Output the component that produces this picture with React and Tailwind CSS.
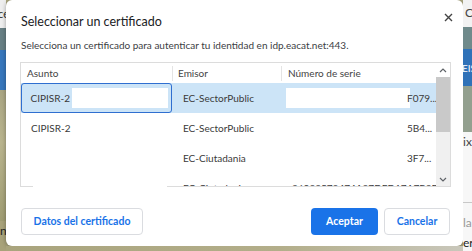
import React from "react";

const font = { fontFamily: 'Lato, "Noto Sans", sans-serif' };

const rows = [
  { subject: "CIPISR-2", issuer: "EC-SectorPublic", serial: "F079...", selected: true, hide: true },
  { subject: "CIPISR-2", issuer: "EC-SectorPublic", serial: "5B4...", hide: true },
  { subject: "", issuer: "EC-Ciutadania", serial: "3F7...", hide: true },
  { subject: "", issuer: "EC-Ciutadania", serial: "36022573474A27DFD17A7B8D" },
];

function Chevron({ up }) {
  return (
    <svg width="8" height="5" viewBox="0 0 8 5" fill="none">
      <polyline
        points={up ? "1,4 4,1 7,4" : "1,1 4,4 7,1"}
        stroke="#5f6368"
        strokeWidth="1.2"
      />
    </svg>
  );
}

function Row({ r }) {
  return (
    <div className={`flex h-[30px] shrink-0 items-center ${r.selected ? "bg-[#cce4f7]" : ""}`}>
      <div
        className={`flex h-full w-[151px] shrink-0 items-center whitespace-nowrap ${
          r.selected ? "rounded-[3px] border-[1.5px] border-[#2f6fd0] pl-[8.5px]" : "pl-[10px]"
        }`}
      >
        <span>{r.subject}</span>
        {r.subject && r.selected && <span className="ml-[2px] h-[20px] w-[96px] shrink-0 bg-white" />}
      </div>
      <div className="w-[109px] shrink-0 whitespace-nowrap pl-[11px]">{r.issuer}</div>
      <div className="flex w-[155px] shrink-0 items-center overflow-hidden pl-[5px]">
        {r.hide ? (
          <>
            <span className={`relative h-[20px] w-[124px] shrink-0 ${r.selected ? "bg-white" : "bg-transparent"}`} />
            <span className="relative -ml-[3px] whitespace-nowrap">{r.serial}</span>
          </>
        ) : (
          <span className="whitespace-nowrap pl-[6px]">{r.serial}</span>
        )}
      </div>
    </div>
  );
}

export default function App() {
  return (
    <div style={font} className="flex h-[251px] w-[472px] overflow-hidden bg-[#aaa67f]">
      {/* left strip of the page behind */}
      <div className="flex w-[6px] shrink-0 flex-col overflow-hidden">
        <div className="h-[28px] whitespace-nowrap bg-[#eeeeee] pt-[7px] text-[11px] leading-[14px] text-[#333]">
          <span className="-ml-[2px]">ce</span>
        </div>
        <div className="h-[22px] bg-[#677f84]" />
        <div className="h-[40px] bg-[#3777bc]" />
        <div className="flex-1 bg-[linear-gradient(180deg,#a9a583,#b9b48e_40%,#9f9c72)]" />
        <div className="h-[30px] bg-[#a8a27a] text-[12px] leading-[20px] text-[#222]">n</div>
      </div>

      <div className="flex w-[457px] shrink-0 flex-col">
        {/* dialog */}
        <div className="flex h-[246px] flex-col rounded-[6px] bg-white shadow-[0_1px_4px_rgba(0,0,0,0.35)]">
          <div className="flex items-start justify-between pl-[15px] pr-[8px] pt-[12px]">
            <div className="h-[20px] text-[12.5px] leading-[20px] text-[#202124]">Seleccionar un certificado</div>
            <button className="mt-[-2px] flex h-[14px] w-[14px] items-center justify-center">
              <svg width="9" height="9" viewBox="0 0 9 9">
                <path d="M1 1 L8 8 M8 1 L1 8" stroke="#444" strokeWidth="1.4" />
              </svg>
            </button>
          </div>
          <div className="mt-[6px] pl-[15px] text-[10px] leading-[14px] text-[#3c4043]">
            Selecciona un certificado para autenticar tu identidad en idp.eacat.net:443.
          </div>

          {/* certificate table */}
          <div className="relative ml-[14px] mt-[10px] flex h-[125px] w-[431px] border border-[#dcdcdc] text-[10px] text-[#3a3a3a]">
            <div className="flex w-[415px] flex-col overflow-hidden">
              <div className="flex h-[20px] shrink-0 items-center text-[#444]">
                <div className="w-[151px] shrink-0 pl-[6px]">Asunto</div>
                <div className="flex w-[109px] shrink-0 items-center">
                  <span className="h-[15px] w-px bg-[#e4e4e4]" />
                  <span className="pl-[5px]">Emisor</span>
                </div>
                <div className="flex w-[155px] shrink-0 items-center">
                  <span className="h-[15px] w-px bg-[#e4e4e4]" />
                  <span className="pl-[6px]">Número de serie</span>
                </div>
              </div>
              {rows.map((r, i) => (
                <Row key={i} r={r} />
              ))}
            </div>
            {/* scrollbar */}
            <div className="flex w-[14px] flex-col bg-[#f0f0f0]">
              <div className="flex h-[14px] items-center justify-center bg-white">
                <Chevron up />
              </div>
              <div className="h-[55px] bg-[#c9c9c9]" />
              <div className="flex-1" />
              <div className="flex h-[14px] items-center justify-center">
                <Chevron />
              </div>
            </div>
            <span className="absolute bottom-[-1px] left-[12px] h-[2px] w-[134px] bg-white" />
          </div>

          {/* buttons */}
          <div className="mt-[21px] flex items-center pl-[15px] pr-[13px] text-[10.5px] font-bold">
            <button className="h-[27px] w-[122px] rounded-[4px] border border-[#dadce0] text-[#1a73e8]">
              Datos del certificado
            </button>
            <div className="flex-1" />
            <button className="h-[27px] w-[67px] rounded-[4px] bg-[#1a73e8] text-white">Aceptar</button>
            <button className="ml-[6px] h-[27px] w-[66px] rounded-[4px] border border-[#dadce0] text-[#1a73e8]">
              Cancelar
            </button>
          </div>
        </div>
        <div className="flex-1 bg-[linear-gradient(90deg,#a9a47d,#b3ae8a_60%,#c9c7bb)]" />
      </div>

      {/* right strip of the page behind */}
      <div className="flex w-[9px] shrink-0 flex-col overflow-hidden whitespace-nowrap text-[12px]">
        <div className="h-[28px] bg-[#f2f2f2] pl-[2px] pt-[5px] leading-[16px] text-[#444]">C</div>
        <div className="h-[22px] bg-[#6f8a8b]" />
        <div className="h-[38px] bg-[#2f72b8] pt-[12px] text-[10px] leading-[14px] text-white">
          <span className="-ml-[1px]">EIS</span>
        </div>
        <div className="h-[47px] bg-[#93a08f]" />
        <div className="flex flex-1 flex-col bg-[#f7f7f7] leading-[16px] text-[#444]">
          <div className="mt-[2px]">ix</div>
          <div className="mt-[52px] h-px bg-[#c8c8c8]" />
          <div className="mt-[12px] text-[#999]">la</div>
          <div className="mt-[4px] text-[#222]">er</div>
        </div>
      </div>
    </div>
  );
}
